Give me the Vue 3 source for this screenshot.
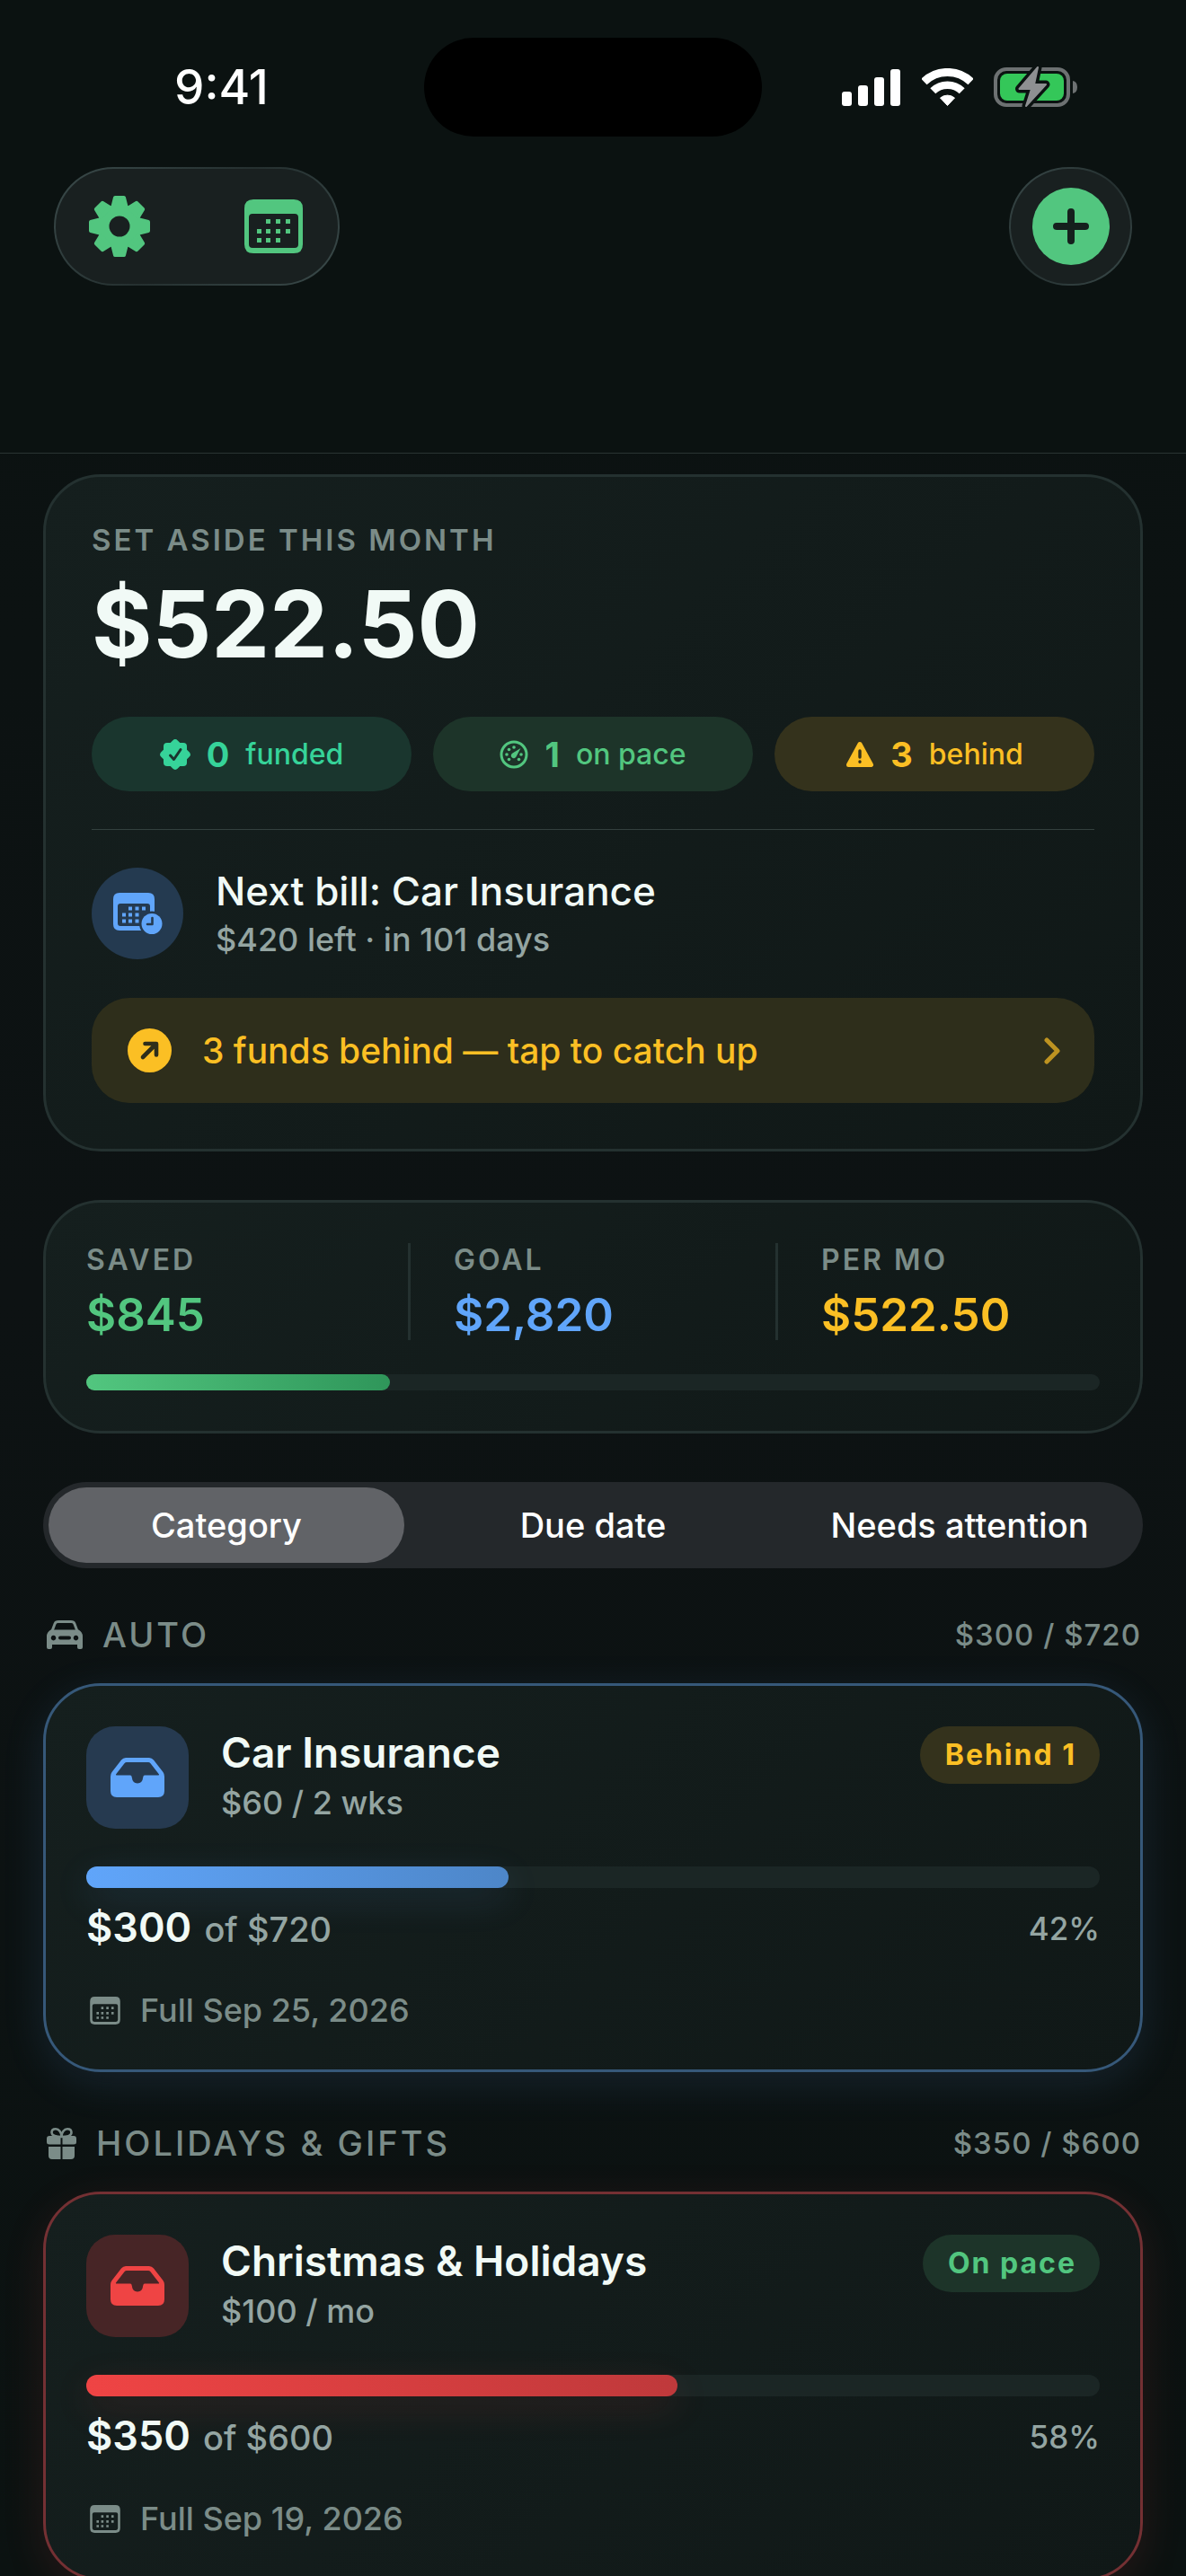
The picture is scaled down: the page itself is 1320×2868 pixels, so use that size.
<template>
  <div class="app">
    <!-- shared icons -->
    <svg class="defs" aria-hidden="true">
      <symbol id="calendar" viewBox="0 0 65 60">
        <path fill-rule="evenodd" d="M10 0H55Q65 0 65 10V50Q65 60 55 60H10Q0 60 0 50V10Q0 0 10 0ZM9 16Q5 16 5 20V50Q5 54 9 54H56Q60 54 60 50V20Q60 16 56 16Z" />
        <path d="M24 22h5v5h-5zM35 22h5v5h-5zM46 22h5v5h-5zM14 33h5v5h-5zM24 33h5v5h-5zM35 33h5v5h-5zM46 33h5v5h-5zM14 43h5v5h-5zM24 43h5v5h-5zM35 43h5v5h-5z" />
      </symbol>
      <symbol id="tray" viewBox="0 0 60 44">
        <path fill-rule="evenodd" d="M17 0H43Q46 0 48 2.5L58.5 16Q60 18 60 21V37Q60 44 53 44H7Q0 44 0 37V21Q0 18 1.5 16L12 2.5Q14 0 17 0ZM18 5Q16.5 5 15.5 6.3L6 18.5Q5.5 19.5 7 19.5H22Q23.5 19.5 23.7 21.5Q24.5 28.5 30 28.5Q35.5 28.5 36.3 21.5Q36.5 19.5 38 19.5H53Q54.5 19.5 54 18.5L44.5 6.3Q43.5 5 42 5Z" />
      </symbol>
      <symbol id="car" viewBox="0 0 40 32">
        <path fill="none" stroke="currentColor" stroke-width="3" d="M6 12L9 4Q10 1.6 13 1.6H27Q30 1.6 31 4L34 12" />
        <path fill-rule="evenodd" d="M4.500 10.500H35.500Q40 13 40 18V30Q40 32 38 32H36Q34 32 34 30V27H6V30Q6 32 4 32H2Q0 32 0 30V18Q0 13 4.500 10.500ZM7.500 16.800a2.800 2.800 0 1 0 .01 0ZM32.500 16.800a2.800 2.800 0 1 0 .01 0ZM15 17.600a2 2 0 0 0 0 4H25a2 2 0 0 0 0 -4Z" />
      </symbol>
      <symbol id="gift" viewBox="0 0 33 35">
        <path fill="none" stroke="currentColor" stroke-width="2.600" d="M16.500 10C11 10 5.500 9 5.500 5.200C5.500 2.500 7.500 1.300 10 1.300C13.500 1.300 16.500 5 16.500 10C16.500 5 19.500 1.300 23 1.300C25.500 1.300 27.500 2.500 27.500 5.200C27.500 9 22 10 16.500 10" />
        <path d="M3 9H15.500V18.500H3Q0 18.500 0 16V12Q0 9 3 9ZM17.500 9H30Q33 9 33 12V16Q33 18.500 30 18.500H17.500ZM2 21H15.500V35H6Q2 35 2 31ZM17.500 21H31V31Q31 35 27 35H17.500Z" />
      </symbol>
    </svg>

    <header class="top">
      <div class="status">
        <span class="time">9:41</span>
        <span class="island"></span>
        <span class="signals">
          <svg width="66" height="42" viewBox="0 0 66 42" fill="#fff">
            <rect y="26" width="11" height="16" rx="3" />
            <rect x="18" y="19" width="11" height="23" rx="3" />
            <rect x="36" y="10" width="11" height="32" rx="3" />
            <rect x="54" y="1" width="11" height="41" rx="3" />
          </svg>
          <svg class="wifi" width="57" height="43" viewBox="0 0 57 43" stroke="#fff">
            <path stroke-width="9" d="M2.400 15A37.500 37.500 0 0 1 54.600 15" />
            <path stroke-width="8.500" d="M12.300 25.300A23.200 23.200 0 0 1 44.700 25.300" />
            <path fill="#fff" stroke-linejoin="round" d="M20.500 33A12.500 12.500 0 0 1 36.500 33L28.500 41.500Z" />
          </svg>
          <svg width="94" height="46" viewBox="0 0 94 46">
            <rect x="2" y="3" width="81" height="40" rx="12" fill="none" stroke="#6d7172" stroke-width="4" />
            <path fill="#6d7172" d="M88 16Q93 17 93 23T88 30Z" />
            <rect x="7" y="8" width="71" height="30" rx="8" fill="#34c759" />
            <path fill="#0b1211" stroke="#0b1211" stroke-width="9" stroke-linejoin="round" d="M49 1L28.500 25H42L36 44L58 20H45Z" />
            <path fill="#8e9092" stroke="#8e9092" stroke-width="2" stroke-linejoin="round" d="M49 1L28.500 25H42L36 44L58 20H45Z" />
          </svg>
        </span>
      </div>

      <nav class="toolbar">
        <div class="glass tools">
          <button type="button" aria-label="Settings">
            <svg width="68" height="68" viewBox="-34 -34 68 68">
              <circle r="18" fill="none" stroke="currentColor" stroke-width="13" />
              <path
                v-for="n in 8"
                :key="n"
                :transform="`rotate(${n * 45})`"
                fill="currentColor"
                stroke="currentColor"
                stroke-width="4"
                stroke-linejoin="round"
                d="M-7.500 -22L-5 -32H5L7.500 -22Z"
              />
            </svg>
          </button>
          <button type="button" aria-label="Calendar">
            <svg width="65" height="60"><use href="#calendar" /></svg>
          </button>
        </div>
        <button type="button" class="glass add" aria-label="Add fund">
          <svg width="86" height="86" viewBox="0 0 86 86">
            <circle cx="43" cy="43" r="43" fill="currentColor" />
            <path stroke="#15201d" stroke-width="8" stroke-linecap="round" d="M43 27V59M27 43H59" />
          </svg>
        </button>
      </nav>
    </header>

    <main class="content">
      <section class="card summary">
        <h2 class="label">SET ASIDE THIS MONTH</h2>
        <p class="total">$522.50</p>

        <div class="pills">
          <div class="pill mint">
            <svg width="34" height="36" viewBox="-17 -18 34 36">
              <rect x="-13" y="-13" width="26" height="26" rx="4" fill="currentColor" />
              <rect x="-13" y="-13" width="26" height="26" rx="4" fill="currentColor" transform="rotate(45)" />
              <path fill="none" stroke="#1a362e" stroke-width="3" stroke-linecap="round" stroke-linejoin="round" d="M-5.500 1L-1.500 5.500L6 -5.500" />
            </svg>
            <strong>0</strong><span>funded</span>
          </div>
          <div class="pill green">
            <svg width="32" height="32" viewBox="-16 -16 32 32">
              <circle r="14" fill="none" stroke="currentColor" stroke-width="3" />
              <g fill="currentColor">
                <circle cx="-8" cy="0" r="1.800" />
                <circle cx="-5.500" cy="-5.500" r="1.800" />
                <circle cx="0" cy="-8" r="1.800" />
                <circle cx="8" cy="0" r="1.800" />
                <circle cx="-5.500" cy="5.500" r="1.800" />
                <circle cx="5.500" cy="5.500" r="1.800" />
                <path d="M7.500 -7L2.500 2.500A3 3 0 1 1 -1.500 -1.500Z" />
              </g>
            </svg>
            <strong>1</strong><span>on pace</span>
          </div>
          <div class="pill amber">
            <svg width="32" height="30" viewBox="0 0 32 30">
              <path fill="currentColor" stroke="currentColor" stroke-width="5" stroke-linejoin="round" d="M16 3.500L28.500 26.500H3.500Z" />
              <path stroke="#34321c" stroke-width="3.400" stroke-linecap="round" d="M16 11V18M16 23V23.200" />
            </svg>
            <strong>3</strong><span>behind</span>
          </div>
        </div>

        <div class="next">
          <span class="next-icon">
            <svg width="55" height="47" viewBox="0 0 55 47">
              <path fill="currentColor" fill-rule="evenodd" d="M7 0H39Q46 0 46 7V35Q46 42 39 42H7Q0 42 0 35V7Q0 0 7 0ZM8 12Q5 12 5 15V34Q5 37 8 37H38Q41 37 41 34V15Q41 12 38 12Z" />
              <path fill="currentColor" d="M17 15.500h4v4h-4zM24.500 15.500h4v4h-4zM32 15.500h4v4h-4zM10 22.500h4v4h-4zM17 22.500h4v4h-4zM24.500 22.500h4v4h-4zM10 29.500h4v4h-4zM17 29.500h4v4h-4zM24.500 29.500h4v4h-4z" />
              <circle cx="43" cy="34.500" r="14" fill="#243a50" />
              <circle cx="43" cy="34.500" r="11.500" fill="currentColor" />
              <path fill="none" stroke="#243a50" stroke-width="2.600" stroke-linecap="round" stroke-linejoin="round" d="M43.500 28V35H38" />
            </svg>
          </span>
          <div>
            <h3 class="next-title">Next bill: Car Insurance</h3>
            <p class="next-sub">$420 left · in 101 days</p>
          </div>
        </div>

        <button type="button" class="banner">
          <svg width="49" height="49" viewBox="0 0 49 49">
            <circle cx="24.500" cy="24.500" r="24.500" fill="currentColor" />
            <path fill="none" stroke="#2e2e1b" stroke-width="4.600" stroke-linecap="round" stroke-linejoin="round" d="M17 32L31.500 17.500M19.500 17H32V29.500" />
          </svg>
          <span>3 funds behind — tap to catch up</span>
          <svg class="chevron" width="18" height="30" viewBox="0 0 18 30">
            <path fill="none" stroke="currentColor" stroke-width="5" stroke-linecap="round" stroke-linejoin="round" d="M3 3L15 15L3 27" />
          </svg>
        </button>
      </section>

      <section class="card totals">
        <dl class="stats">
          <div v-for="stat in stats" :key="stat.label" class="stat">
            <dt class="label">{{ stat.label }}</dt>
            <dd :class="stat.tone">{{ stat.value }}</dd>
          </div>
        </dl>
        <div class="track thin">
          <div class="fill green-fill" :style="{ width: savedPercent + '%' }"></div>
        </div>
      </section>

      <div class="segments">
        <button
          v-for="tab in tabs"
          :key="tab"
          type="button"
          :class="{ active: tab === activeTab }"
          :aria-pressed="tab === activeTab"
          @click="activeTab = tab"
        >{{ tab }}</button>
      </div>

      <div class="groups">
        <section v-for="group in groups" :key="group.name">
          <div class="group-head">
            <svg :width="group.iconWidth" :height="group.iconHeight"><use :href="'#' + group.icon" /></svg>
            <h2>{{ group.name }}</h2>
            <span>{{ group.amount }}</span>
          </div>
          <article v-for="fund in group.funds" :key="fund.name" class="card fund" :class="fund.color">
            <div class="fund-head">
              <span class="tile">
                <svg width="60" height="44"><use href="#tray" /></svg>
              </span>
              <div class="fund-text">
                <h3>{{ fund.name }}</h3>
                <p>{{ fund.rate }}</p>
              </div>
              <span class="badge" :class="fund.badgeTone">{{ fund.badge }}</span>
            </div>
            <div class="track">
              <div class="fill" :style="{ width: fund.saved / fund.goal * 100 + '%' }"></div>
            </div>
            <div class="progress">
              <p><strong>${{ fund.saved }}</strong> of ${{ fund.goal }}</p>
              <span>{{ Math.round(fund.saved / fund.goal * 100) }}%</span>
            </div>
            <p class="due">
              <svg width="34" height="31"><use href="#calendar" /></svg>
              Full {{ fund.full }}
            </p>
          </article>
        </section>
      </div>
    </main>
  </div>
</template>

<script setup>
import { ref, computed } from 'vue';

const saved = 845;
const goal = 2820;
const savedPercent = computed(() => saved / goal * 100);

const stats = [
  { label: 'SAVED', value: '$845', tone: 'green' },
  { label: 'GOAL', value: '$2,820', tone: 'blue' },
  { label: 'PER MO', value: '$522.50', tone: 'amber' },
];

const tabs = ['Category', 'Due date', 'Needs attention'];
const activeTab = ref('Category');

const groups = ref([
  {
    name: 'AUTO',
    icon: 'car',
    iconWidth: 40,
    iconHeight: 32,
    amount: '$300 / $720',
    funds: [
      {
        name: 'Car Insurance',
        rate: '$60 / 2 wks',
        badge: 'Behind 1',
        badgeTone: 'amber',
        color: 'blue-fund',
        saved: 300,
        goal: 720,
        full: 'Sep 25, 2026',
      },
    ],
  },
  {
    name: 'HOLIDAYS & GIFTS',
    icon: 'gift',
    iconWidth: 33,
    iconHeight: 35,
    amount: '$350 / $600',
    funds: [
      {
        name: 'Christmas & Holidays',
        rate: '$100 / mo',
        badge: 'On pace',
        badgeTone: 'green',
        color: 'red-fund',
        saved: 350,
        goal: 600,
        full: 'Sep 19, 2026',
      },
    ],
  },
]);
</script>

<style>
body {
  margin: 0;
  background: #0b1211;
}
</style>

<style scoped>
.app {
  height: 100vh;
  display: flex;
  flex-direction: column;
  overflow: hidden;
  background: linear-gradient(#0b1211, #0d1213 50%, #0b1211);
  color: #f1faf6;
  font-family: Inter, "Liberation Sans", sans-serif;
}

.app * {
  box-sizing: border-box;
}

h2, h3, p, dl, dd {
  margin: 0;
}

button {
  padding: 0;
  border: 0;
  background: none;
  color: inherit;
  font: inherit;
  cursor: pointer;
}

svg {
  display: block;
  flex: none;
  fill: currentColor;
}

.defs {
  position: absolute;
  width: 0;
  height: 0;
}

.mint { color: #36d399; }
.green { color: #52c67f; }
.blue { color: #60a5fa; }
.amber { color: #fbbf24; }

/* top bar */
.top {
  flex: none;
  padding: 42px 60px 186px;
  border-bottom: 1px solid #2a3433;
  background: #0b1211;
}

.status {
  display: grid;
  grid-template-columns: 1fr 376px 1fr;
  align-items: center;
  height: 110px;
}

.time {
  padding-left: 134px;
  color: #fff;
  font-size: 53px;
  font-weight: 500;
}

.island {
  height: 110px;
  border-radius: 55px;
  background: #000;
}

.signals {
  display: flex;
  justify-content: flex-end;
  align-items: center;
  gap: 23px;
  padding-right: 60px;
  color: #fff;
}

.wifi {
  fill: none;
}

.toolbar {
  display: flex;
  justify-content: space-between;
  margin-top: 34px;
  color: #52c67f;
}

.glass {
  height: 132px;
  border: 2px solid transparent;
  border-radius: 66px;
  background:
    linear-gradient(#192020, #192020) padding-box,
    linear-gradient(135deg, #3a4a4a, #253030 50%, #3a4a4a) border-box;
}

.tools {
  display: flex;
  align-items: center;
  justify-content: space-between;
  width: 318px;
  padding: 0 39px 0 37px;
}

.add {
  display: flex;
  align-items: center;
  justify-content: center;
  width: 137px;
}

/* cards */
.content {
  flex: 1;
  min-height: 0;
  overflow: hidden;
  padding: 23px 48px 0;
}

.card {
  border: 3px solid #243130;
  border-radius: 64px;
  background: linear-gradient(135deg, #151f1e, #101817);
}

.label {
  color: #7b8c88;
  font-size: 33px;
  font-weight: 600;
  letter-spacing: 3px;
  line-height: 38px;
}

.summary {
  padding: 51px;
}

.total {
  margin: 20px 0 48px;
  font-size: 103px;
  font-weight: 700;
  line-height: 110px;
}

.pills {
  display: grid;
  grid-template-columns: repeat(3, 1fr);
  gap: 24px;
  padding-bottom: 42px;
  border-bottom: 1px solid #33403e;
}

.pill {
  display: flex;
  align-items: center;
  justify-content: center;
  gap: 18px;
  height: 83px;
  border-radius: 42px;
  font-size: 32px;
  font-weight: 500;
}

.pill strong {
  font-size: 38px;
  font-weight: 700;
}

.pill.mint { background: #1a362e; }
.pill.green { background: #1d3429; }
.pill.amber { background: #34321c; }

.next {
  display: flex;
  align-items: center;
  gap: 36px;
  height: 102px;
  margin: 42px 0 43px;
}

.next-icon {
  display: flex;
  align-items: center;
  justify-content: center;
  width: 102px;
  height: 102px;
  border-radius: 50%;
  background: #243a50;
  color: #60a5fa;
}

.next-title {
  font-size: 44px;
  font-weight: 500;
  line-height: 58px;
}

.next-sub {
  color: #94a5a2;
  font-size: 36px;
  font-weight: 500;
  line-height: 50px;
}

.banner {
  display: flex;
  align-items: center;
  width: 100%;
  height: 117px;
  padding: 0 38px 0 40px;
  border-radius: 42px;
  background: #2e2e1b;
  color: #fbbf24;
  font-size: 39px;
  font-weight: 500;
}

.banner span {
  margin-left: 34px;
}

.chevron {
  margin-left: auto;
  opacity: 0.7;
}

.totals {
  margin-top: 54px;
  padding: 45px;
}

.stats {
  display: grid;
  grid-template-columns: repeat(3, 1fr);
  gap: 99px;
}

.stat {
  position: relative;
  height: 108px;
}

.stat + .stat::before {
  content: "";
  position: absolute;
  left: -51px;
  width: 3px;
  height: 108px;
  background: #243130;
}

.stat .label {
  font-size: 32px;
}

.stat dd {
  margin-top: 14px;
  font-size: 51px;
  font-weight: 600;
  line-height: 56px;
}

.track {
  height: 24px;
  margin-top: 42px;
  border-radius: 12px;
  background: #1b2625;
}

.thin {
  height: 18px;
  margin-top: 38px;
}

.fill {
  height: 100%;
  border-radius: 12px;
}

.green-fill {
  background: linear-gradient(90deg, #52c67f, #2f965a);
}

.segments {
  display: grid;
  grid-template-columns: repeat(3, 1fr);
  gap: 12px;
  height: 96px;
  margin-top: 54px;
  padding: 6px;
  border-radius: 48px;
  background: #24282b;
  color: #fff;
  font-size: 38px;
  font-weight: 500;
}

.segments button {
  border-radius: 42px;
}

.segments .active {
  background: #616367;
}

/* groups */
.groups {
  display: flex;
  flex-direction: column;
  gap: 56px;
  margin-top: 51px;
}

.group-head {
  display: flex;
  align-items: center;
  gap: 22px;
  height: 46px;
  margin-bottom: 31px;
  padding: 0 2px 0 4px;
  color: #7b8c88;
}

.group-head h2 {
  font-size: 38px;
  font-weight: 500;
  letter-spacing: 3px;
}

.group-head span {
  margin-left: auto;
  font-size: 33px;
  font-weight: 500;
  letter-spacing: 1px;
}

.fund {
  padding: 45px;
}

.blue-fund {
  --from: #60a5fa;
  --to: #4d86c8;
  --tile: #263a50;
  border-color: #365879;
  box-shadow: 0 12px 48px rgba(96, 165, 250, 0.12);
}

.red-fund {
  --from: #ef4444;
  --to: #bf393b;
  --tile: #472526;
  border-color: #743033;
  box-shadow: 0 12px 48px rgba(239, 68, 68, 0.12);
}

.fund-head {
  display: flex;
  align-items: flex-start;
}

.tile {
  display: flex;
  align-items: center;
  justify-content: center;
  width: 114px;
  height: 114px;
  border-radius: 32px;
  background: var(--tile);
  color: var(--from);
}

.fund-text {
  flex: 1;
  margin-left: 36px;
}

.fund-text h3 {
  font-size: 46px;
  font-weight: 600;
  line-height: 58px;
}

.fund-text p {
  color: #94a5a2;
  font-size: 36px;
  font-weight: 500;
  line-height: 54px;
}

.badge {
  padding: 0 26px 0 28px;
  border-radius: 32px;
  font-size: 32px;
  font-weight: 700;
  letter-spacing: 2px;
  line-height: 64px;
}

.badge.amber { background: #34321c; }
.badge.green { background: #1d3429; }

.fund .fill {
  background: linear-gradient(90deg, var(--from), var(--to));
  box-shadow: 0 12px 42px color-mix(in srgb, var(--from) 14%, transparent);
}

.progress {
  display: flex;
  align-items: center;
  justify-content: space-between;
  height: 56px;
  margin-top: 17px;
  color: #94a5a2;
  font-size: 38px;
  font-weight: 500;
  line-height: 56px;
}

.progress strong {
  margin-right: 4px;
  color: #f1faf6;
  font-size: 45px;
  font-weight: 600;
}

.progress span {
  font-size: 35px;
}

.due {
  display: flex;
  align-items: center;
  gap: 22px;
  margin-top: 42px;
  padding-left: 4px;
  color: #7b8c88;
  font-size: 36px;
  font-weight: 500;
  line-height: 42px;
}
</style>
